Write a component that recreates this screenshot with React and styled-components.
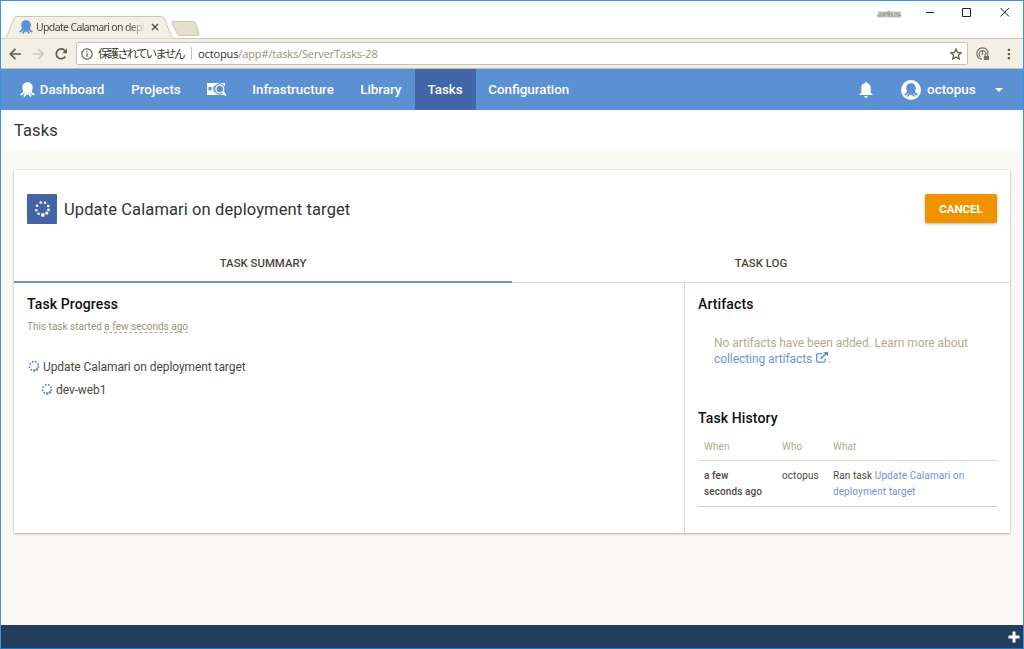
import React from 'react'
import styled, { createGlobalStyle } from 'styled-components'

const GlobalStyle = createGlobalStyle`
  * {
    box-sizing: border-box;
  }

  body {
    margin: 0;
    overflow: hidden;
    font-family: Roboto, sans-serif;
    color: #333;
  }

  h1, h2, h3, p {
    margin: 0;
    font-weight: 400;
  }

  svg {
    display: block;
    flex: none;
  }
`;

const DOTS = [
  [9.500, 3.500, 1.9], [15.500, 4, 1.8], [20, 8.500, 1.9], [20.500, 14, 2], [18, 18.500, 2.4],
  [12.500, 21, 2.6], [6.500, 19.500, 1.8], [3.300, 14.500, 1.8], [4.300, 8, 1.8],
];

function Octopus({ size, color }) {
  return (
    <svg width={size} height={size} viewBox="0 0 24 24" fill={color}>
      <path d="M12 .5C7 .5 3.700 4 3.700 8.800c0 2.600 1.500 4.500 1.500 7h13.600c0-2.500 1.500-4.400 1.500-7C20.300 4 17 .5 12 .5z" />
      <path d="M6.500 14Q6 19 2 19.800M9 15Q9.500 20 7 22.200M15 15Q14.500 20 17 22.200M17.500 14Q18 19 22 19.800M12 15V19.500" fill="none" stroke={color} strokeWidth="2.900" strokeLinecap="round" />
    </svg>
  )
}

function Spinner({ size, color }) {
  return (
    <svg width={size} height={size} viewBox="0 0 24 24" fill={color}>
      {DOTS.map(([x, y, r], index) => <circle key={index} cx={x} cy={y} r={r} />)}
    </svg>
  )
}

function TitleBar() {
  return (
    <TitleRow>
      <Tab>
        <TabShape width="204" height="24" viewBox="0 0 204 24">
          <path d="M0 23.500H2.500Q5 23.500 6 21L13 3Q14 1.500 16 1.500H159Q162 1.500 163 3L170 20Q171.500 23.500 174 23.500" fill="#f2efe4" stroke="#c9c8c0" />
          <path d="M171.500 6.500H192.500Q194 6.500 194.600 8L198 18.500Q198.500 20.500 197 20.500H178.500Q177 20.500 176.400 19L171 8Q170.500 6.500 171.500 6.500Z" fill="#e5dfcb" stroke="#cbc6b8" />
        </TabShape>
        <Octopus size={14} color="#5b90d3" />
        <TabTitle>Update Calamari on depl</TabTitle>
        <svg width="8" height="8" viewBox="0 0 8 8" stroke="#5b5646" strokeWidth="1.500">
          <path d="M1 1l6 6M7 1l-6 6" />
        </svg>
      </Tab>
      <Profile>aetos</Profile>
      <WindowButtons width="86" height="11" viewBox="0 0 86 11" fill="none" stroke="#222">
        <path d="M1 5.500h8M37.500 1.500h8v8h-8zM75.500 1l8.500 8.500M84 1l-8.500 8.500" />
      </WindowButtons>
    </TitleRow>
  )
}

function AddressBar() {
  return (
    <Toolbar>
      <svg width="60" height="14" viewBox="0 0 60 14" fill="none" stroke="#635d4c" strokeWidth="1.700">
        <path d="M12 7H1.500M6.500 1.800L1.300 7l5.200 5.200" />
        <path d="M23.500 7H34M29 1.800L34.200 7 29 12.200" stroke="#d0ccbd" />
        <path d="M56.300 9.500A4.900 4.900 0 1 1 56 3.800" />
        <path d="M58 1.500v4.700h-4.700z" fill="#635d4c" stroke="none" />
      </svg>
      <AddressField>
        <svg width="12" height="12" viewBox="0 0 12 12" fill="none" stroke="#635d4c" strokeWidth="1.200">
          <circle cx="6" cy="6" r="5.200" />
          <path d="M6 5.200v3.600M6 3v1.300" />
        </svg>
        <Security>保護されていません</Security>
        <Url>octopus<span>/app#/tasks/ServerTasks-28</span></Url>
        <svg width="12" height="12" viewBox="0 0 12 12" fill="none" stroke="#635d4c" strokeWidth="1.300">
          <path d="M6 1l1.500 3.400 3.700.4-2.800 2.500.8 3.700L6 9.100 2.800 11l.8-3.700L.8 4.800l3.700-.4z" />
        </svg>
      </AddressField>
      <svg width="14" height="14" viewBox="0 0 14 14" fill="none" stroke="#77715f" strokeWidth="1.200">
        <path d="M6 12.200A5.700 5.700 0 1 1 12.200 6" />
        <path d="M4.500 9.800A3.400 3.400 0 1 1 9.700 6M6.500 4v4" />
        <path d="M7.800 9h5.200v4H7.800z" fill="#77715f" stroke="none" />
        <path d="M9 9.200V8a1.400 1.400 0 0 1 2.800 0v1.200" />
      </svg>
      <MenuDots width="4" height="12" viewBox="0 0 4 12" fill="#635d4c">
        <path d="M.8 0.800h2.300v2.300H.8zM.8 4.900h2.300v2.300H.8zM.8 9h2.300v2.300H.8z" />
      </MenuDots>
    </Toolbar>
  )
}

function NavBar() {
  return (
    <Nav>
      <NavItem $width={117} $first>
        <Octopus size={15} color="#fff" />
        Dashboard
      </NavItem>
      <NavItem $width={76}>Projects</NavItem>
      <NavItem $width={45}>
        <svg width="20" height="15" viewBox="0 0 20 15">
          <path d="M0 1h18v12H0z" fill="#fff" />
          <path d="M1.500 5h3v3.500h-3zM6 4.500h3v1H6zM6 6.500h2v1H6zM6 8.500h3v1H6z" fill="#5b90d3" />
          <circle cx="12.800" cy="7" r="4.300" fill="#fff" stroke="#5b90d3" strokeWidth="3" />
          <circle cx="12.800" cy="7" r="3.900" fill="#5b90d3" stroke="#fff" strokeWidth="1.400" />
          <path d="M15.500 10l3.500 3.700" stroke="#fff" strokeWidth="1.800" />
        </svg>
      </NavItem>
      <NavItem $width={108}>Infrastructure</NavItem>
      <NavItem $width={67.500}>Library</NavItem>
      <NavItem $width={61} $active>Tasks</NavItem>
      <NavItem $width={106.500}>Configuration</NavItem>
      <Account>
        <svg width="14" height="16" viewBox="0 0 14 16" fill="#fff">
          <path d="M7 0a1.200 1.200 0 0 1 1.200 1.300A4.500 4.500 0 0 1 11.700 6v4.500L13.500 12.300V13H.5v-.7L2.300 10.500V6A4.500 4.500 0 0 1 5.800 1.300 1.200 1.200 0 0 1 7 0zM5.300 14h3.400a1.700 1.700 0 0 1-3.400 0z" />
        </svg>
        <Avatar><Octopus size={14} color="#5b90d3" /></Avatar>
        <UserName>octopus</UserName>
        <svg width="8" height="4" viewBox="0 0 8 4" fill="#fff"><path d="M0 0h8L4 4z" /></svg>
      </Account>
    </Nav>
  )
}

function TaskProgress() {
  return (
    <Progress>
      <SectionTitle>Task Progress</SectionTitle>
      <Started>This task started <span>a few seconds ago</span></Started>
      <Step>
        <Spinner size={12} color="#5f7fbd" />
        Update Calamari on deployment target
      </Step>
      <Step $nested>
        <Spinner size={12} color="#5f7fbd" />
        dev-web1
      </Step>
    </Progress>
  )
}

function SidePanel() {
  return (
    <Side>
      <SectionTitle>Artifacts</SectionTitle>
      <Artifacts>
        No artifacts have been added. Learn more about <Link>collecting artifacts <LinkIcon width="12" height="11" viewBox="0 0 12 11" fill="none" stroke="#5b90d3" strokeWidth="1.300">
          <path d="M6 1.700H2.200Q.7 1.700.7 3.200v5.500q0 1.500 1.500 1.500h5.500q1.500 0 1.500-1.500V6.500" />
          <path d="M4.500 6.800L10 1.500" strokeWidth="1.600" />
          <path d="M7.300 0H12v4.600z" fill="#5b90d3" stroke="none" />
        </LinkIcon></Link>.
      </Artifacts>
      <SectionTitle>Task History</SectionTitle>
      <History>
        <thead>
          <tr><th>When</th><th>Who</th><th>What</th></tr>
        </thead>
        <tbody>
          <tr>
            <td><b>a few seconds ago</b></td>
            <td>octopus</td>
            <td>Ran task <Link>Update Calamari on deployment target</Link></td>
          </tr>
        </tbody>
      </History>
    </Side>
  )
}

export default function App() {
  return (
    <Window>
      <GlobalStyle />
      <TitleBar />
      <AddressBar />
      <NavBar />
      <PageHeader>Tasks</PageHeader>
      <Content>
        <Card>
          <CardHeader>
            <TaskIcon><Spinner size={17} color="#fff" /></TaskIcon>
            <h2>Update Calamari on deployment target</h2>
            <CancelButton>CANCEL</CancelButton>
          </CardHeader>
          <Tabs>
            <TaskTab $active>TASK SUMMARY</TaskTab>
            <TaskTab>TASK LOG</TaskTab>
          </Tabs>
          <Columns>
            <TaskProgress />
            <SidePanel />
          </Columns>
        </Card>
      </Content>
      <Footer>
        <svg width="12" height="12" viewBox="0 0 12 12" fill="#fff">
          <path d="M4.500 .5h3v4H11.500v3H7.500v4h-3v-4H.5v-3h4z" />
        </svg>
      </Footer>
    </Window>
  )
}

const Window = styled.div`
  width: 1024px;
  height: 649px;
  display: flex;
  flex-direction: column;
  border: 1px solid #3f93dc;
  border-bottom-color: #1a77c9;
  background: #faf9f5;
  overflow: hidden;
`;

const TitleRow = styled.div`
  height: 38px;
  flex: none;
  display: flex;
  background: #fff;
  border-bottom: 1px solid #c9c8c0;
`;

const Tab = styled.div`
  position: relative;
  width: 204px;
  height: 24px;
  margin-top: 14px;
  padding-left: 18px;
  display: flex;
  align-items: center;

  > * {
    position: relative;
  }
`;

const TabShape = styled.svg`
  && {
    position: absolute;
    left: 0;
    top: 0;
  }
`;

const TabTitle = styled.div`
  width: 110px;
  margin: 0 5px 0 3px;
  font: 10.500px 'Noto Sans', sans-serif;
  letter-spacing: -0.640px;
  white-space: nowrap;
  color: #4a463a;
  mask-image: linear-gradient(to right, #000 92px, transparent 110px);
`;

const Profile = styled.div`
  margin: 7px 2px 0 auto;
  font: 9.200px/12px 'Open Sans', sans-serif;
  color: #f4f1e8;
  text-shadow: 0 0 1px #3b3628, 0 0 1px #3b3628, 0 0 1px #3b3628;
`;

const WindowButtons = styled.svg`
  margin: 6px 12px 0 22px;
`;

const Toolbar = styled.div`
  height: 30px;
  flex: none;
  display: flex;
  align-items: center;
  padding: 0 12px 0 8px;
  background: #f2efe4;
  border-bottom: 1px solid #c3bfae;
`;

const AddressField = styled.div`
  flex: 1;
  height: 23px;
  margin: 0 8px 0 7px;
  padding: 0 5px 0 4px;
  display: flex;
  align-items: center;
  background: #fff;
  border: 1px solid #c6c4ba;
  border-radius: 2px;
`;

const Security = styled.div`
  width: 94px;
  margin-left: 5px;
  font: 11.600px/13px 'Noto Sans CJK JP', sans-serif;
  letter-spacing: -2px;
  white-space: nowrap;
  color: #3a372e;
  border-right: 1px solid #c6c4ba;
`;

const Url = styled.div`
  flex: 1;
  padding-left: 6px;
  font: 11px 'Open Sans', sans-serif;
  letter-spacing: -0.120px;
  color: #33302a;

  span {
    color: #978f7a;
  }
`;

const MenuDots = styled.svg`
  margin-left: 17px;
`;

const Nav = styled.nav`
  height: 41px;
  flex: none;
  display: flex;
  background: #5b90d3;
  color: #fff;
`;

const NavItem = styled.div`
  width: ${({ $width }) => $width}px;
  padding: 0 0 1px ${({ $first }) => ($first ? 5 : 0)}px;
  display: flex;
  align-items: center;
  justify-content: center;
  gap: 5px;
  font-size: 13.350px;
  font-weight: 500;
  background: ${({ $active }) => ($active ? '#4165a6' : 'none')};
`;

const Account = styled.div`
  margin-left: auto;
  padding-right: 20px;
  display: flex;
  align-items: center;
`;

const Avatar = styled.div`
  width: 20px;
  height: 20px;
  margin: 0 6px 0 28px;
  display: flex;
  align-items: center;
  justify-content: center;
  border-radius: 50%;
  background: #fff;
`;

const UserName = styled.div`
  width: 68px;
  padding-bottom: 1px;
  font-size: 13.500px;
  font-weight: 500;
`;

const PageHeader = styled.h1`
  height: 41px;
  flex: none;
  padding-left: 13px;
  font-size: 16.500px;
  line-height: 42px;
  letter-spacing: 0.100px;
  background: #fff;
`;

const Content = styled.div`
  flex: 1;
  padding: 19px 13px 0 13px;
`;

const Card = styled.div`
  height: 363px;
  display: flex;
  flex-direction: column;
  background: #fff;
  box-shadow: 0 1px 2px #b8b5a2, 0 0 2px #dddac9;
`;

const CardHeader = styled.div`
  height: 76px;
  flex: none;
  display: flex;
  align-items: center;
  padding: 1px 13px 0;

  h2 {
    margin-left: 7px;
    padding-top: 2px;
    font-size: 16.500px;
    letter-spacing: 0.110px;
  }
`;

const TaskIcon = styled.div`
  width: 30px;
  height: 30px;
  display: flex;
  align-items: center;
  justify-content: center;
  border-radius: 1px;
  background: #4165a6;
`;

const CancelButton = styled.button`
  width: 72px;
  height: 29px;
  margin-left: auto;
  padding: 0;
  border: none;
  border-radius: 2px;
  background: #ef9400;
  box-shadow: 0 1px 3px #b8b5a2;
  color: #fff;
  font: 700 11.500px Roboto, sans-serif;
`;

const Tabs = styled.div`
  height: 37px;
  flex: none;
  display: flex;
`;

const TaskTab = styled.div`
  flex: 1;
  font-size: 11.400px;
  font-weight: 500;
  line-height: 34px;
  text-align: center;
  color: #4a463a;
  border-bottom: ${({ $active }) => ($active ? '2px solid #6a97d1' : '1px solid #dddbd0')};
`;

const Columns = styled.div`
  flex: 1;
  display: flex;
`;

const Progress = styled.div`
  flex: 1;
  padding: 12px 13px;
`;

const Side = styled.div`
  width: 326px;
  padding: 12px 13px;
  border-left: 1px solid #dddbd0;
`;

const SectionTitle = styled.h3`
  font-size: 14px;
  font-weight: 500;
  line-height: 18px;
  letter-spacing: 0.120px;
  color: #111;
`;

const Started = styled.p`
  margin: 7px 0 22px;
  font-size: 10px;
  line-height: 14px;
  letter-spacing: 0.010px;
  color: #999281;

  span {
    border-bottom: 1px dashed #b3ad9b;
  }
`;

const Step = styled.div`
  height: 23px;
  padding: 0 0 1px ${({ $nested }) => ($nested ? 14 : 1)}px;
  display: flex;
  align-items: center;
  gap: 3px;
  font-size: 12px;
  letter-spacing: -0.080px;
  color: #4d493e;

  svg {
    margin-top: -3px;
  }
`;

const Artifacts = styled.p`
  margin: 22px 0 42px;
  padding: 0 16px;
  font-size: 12px;
  line-height: 16px;
  letter-spacing: -0.070px;
  color: #b4ab90;
`;

const Link = styled.a`
  color: #6f93d2;
`;

const LinkIcon = styled.svg`
  display: inline-block;
  margin-left: 1px;
`;

const History = styled.table`
  width: 299px;
  margin-top: 9px;
  table-layout: fixed;
  border-collapse: collapse;
  font-size: 10px;
  line-height: 16px;
  letter-spacing: 0.090px;
  text-align: left;
  color: #4d493e;

  th {
    padding: 3px 0 5px 6px;
    font-weight: 400;
    color: #b4ab90;
    border-bottom: 1px solid #dddbd0;
  }

  th:nth-child(1) {
    width: 78px;
  }

  th:nth-child(2) {
    width: 51px;
  }

  td {
    padding: 7px 12px 6px 6px;
    vertical-align: top;
    border-bottom: 1px solid #d2cfbd;
  }

  td:nth-child(2) {
    padding-right: 0;
  }

  b {
    font-weight: 500;
  }
`;

const Footer = styled.div`
  height: 23px;
  flex: none;
  display: flex;
  align-items: center;
  justify-content: flex-end;
  padding-right: 3px;
  background: #243f5d;
`;
